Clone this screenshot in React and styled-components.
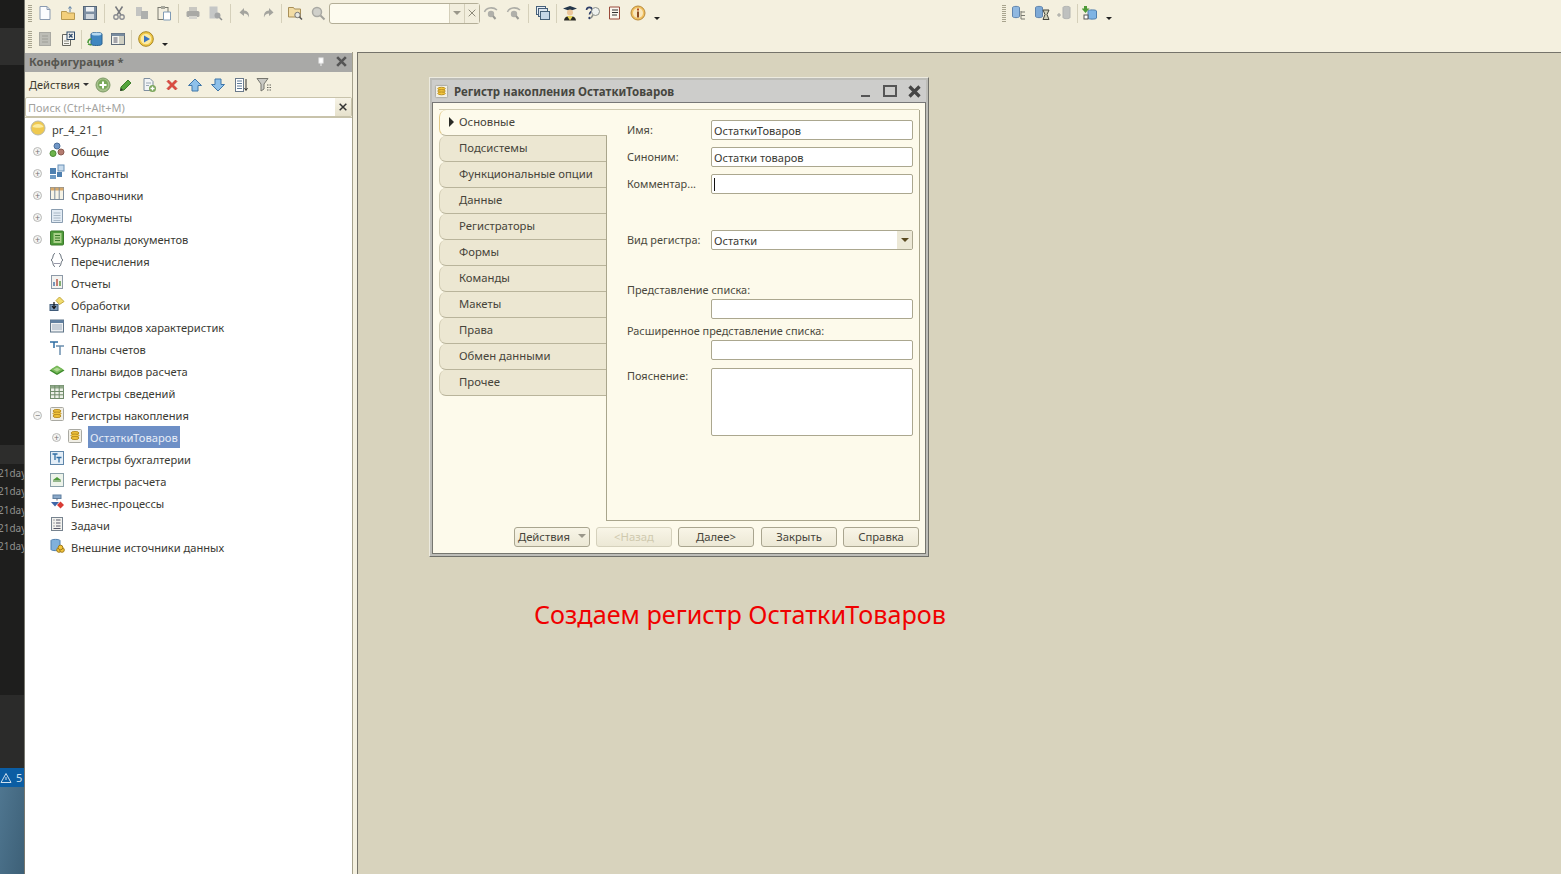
import React from "react";
import styled, { createGlobalStyle } from "styled-components";

const GlobalStyle = createGlobalStyle`
html, body {
    margin: 0;
    padding: 0;
    width: 1561px;
    height: 874px;
    overflow: hidden;
    background: #d8d3bd;
    font-family: "Noto Sans", "Open Sans", sans-serif;
}
* { box-sizing: border-box; }
`;

const S = {
    Page: styled.div`
    display: flex;
    width: 1561px;
    height: 874px;
    overflow: hidden;
    font-size: 11px;
    color: #3d3b2e;
    `,
    Strip: styled.div`
    display: flex;
    flex-direction: column;
    width: 25px;
    height: 874px;
    border-right: 1px solid #77776f;
    overflow: hidden;
    background: #1e1e1d;
    `,
    Band: styled.div`
    flex: none;
    height: ${p => p.$h}px;
    background: ${p => p.$bg};
    `,
    LogLines: styled.div`
    flex: none;
    height: 231px;
    margin-left: -2px;
    background: #1e1e1d;
    color: #8f8f8c;
    font-size: 10px;
    line-height: 18.3px;
    white-space: nowrap;
    `,
    StatusBadge: styled.div`
    flex: none;
    display: flex;
    align-items: center;
    gap: 4px;
    height: 19px;
    background: #0b5da3;
    color: #cfe0ee;
    font-size: 11px;
    `,
    Desktop: styled.div`
    flex: 1;
    background: linear-gradient(100deg, #4f7690 0%, #3d6077 100%);
    `,
    Main: styled.div`
    flex: 1;
    display: flex;
    flex-direction: column;
    min-width: 0;
    background: #f4f0df;
    `,
    Toolbars: styled.div`
    flex: none;
    height: 52px;
    `,
    ToolRow: styled.div`
    display: flex;
    align-items: center;
    height: 26px;
    padding-left: 3px;
    `,
    ToolGroup: styled.div`
    display: flex;
    align-items: center;
    flex: none;
    width: ${p => (p.$w ? `${p.$w}px` : "auto")};
    `,
    Grip: styled.div`
    flex: none;
    width: 4px;
    height: 17px;
    margin-right: 2px;
    background: repeating-linear-gradient(to bottom, #a8a48e 0 1px, transparent 1px 2px);
    `,
    ToolBtn: styled.div`
    flex: none;
    display: flex;
    align-items: center;
    justify-content: center;
    width: 22.6px;
    height: 22px;
    `,
    Sep: styled.div`
    flex: none;
    width: 1px;
    height: 19px;
    margin: 0 ${p => p.$m || 2.5}px;
    background: #d5d0ba;
    `,
    MenuArrow: styled.div`
    flex: none;
    width: 0;
    height: 0;
    margin: 10px 0 0 ${p => p.$m || 5}px;
    border-left: 3px solid transparent;
    border-right: 3px solid transparent;
    border-top: 3px solid #222;
    `,
    Combo: styled.div`
    flex: none;
    display: flex;
    width: 151px;
    height: 21px;
    border: 1px solid #b3ae97;
    border-radius: 3px;
    background: #fdfbef;
    `,
    ComboSpace: styled.div`
    flex: 1;
    `,
    ComboBtn: styled.div`
    flex: none;
    display: flex;
    align-items: center;
    justify-content: center;
    width: 15px;
    border-left: 1px solid #d4cfba;
    background: #f2eedd;
    color: #8d8a7a;
    `,
    Split: styled.div`
    flex: 1;
    display: flex;
    min-height: 0;
    `,
    Panel: styled.div`
    flex: none;
    display: flex;
    flex-direction: column;
    width: 328px;
    border-right: 1px solid #a5a18c;
    `,
    PanelHead: styled.div`
    flex: none;
    display: flex;
    align-items: center;
    height: 19px;
    margin-top: 1px;
    padding: 0 4px 2px;
    background: #a9a9a7;
    color: #565650;
    font-weight: 700;
    font-size: 11.2px;
    `,
    HeadTitle: styled.div`
    flex: 1;
    `,
    PinWrap: styled.div`
    display: flex;
    width: 20px;
    margin-right: 4px;
    justify-content: center;
    `,
    PanelBar: styled.div`
    flex: none;
    display: flex;
    align-items: center;
    height: 24px;
    padding-left: 4px;
    `,
    ActionsLink: styled.div`
    display: flex;
    align-items: center;
    width: 63px;
    color: #3d3b2e;
    `,
    SmallArrow: styled.span`
    display: inline-block;
    margin-left: 3px;
    border-left: 3px solid transparent;
    border-right: 3px solid transparent;
    border-top: 3px solid #333;
    `,
    PanelBtn: styled.div`
    flex: none;
    display: flex;
    align-items: center;
    justify-content: center;
    width: 22.9px;
    height: 22px;
    padding-top: 2px;
    `,
    Search: styled.div`
    flex: none;
    display: flex;
    height: 20px;
    margin-top: 1px;
    border: 1px solid #c8c3ab;
    border-radius: 2px;
    background: #fff;
    `,
    SearchText: styled.div`
    flex: 1;
    padding: 1px 0 0 2px;
    line-height: 18px;
    color: #a3a3a0;
    `,
    SearchClear: styled.div`
    flex: none;
    display: flex;
    align-items: center;
    justify-content: center;
    width: 16px;
    background: linear-gradient(#f6f3e6, #e6e1cc);
    `,
    Tree: styled.div`
    flex: 1;
    border-top: 1px solid #c8c3ab;
    background: #fff;
    font-size: 11.1px;
    `,
    TreeRow: styled.div`
    display: flex;
    align-items: center;
    height: 22px;
    padding-left: ${p => p.$indent}px;
    `,
    Toggle: styled.div`
    flex: none;
    display: flex;
    align-items: center;
    justify-content: center;
    width: 9px;
    height: 9px;
    margin: 1px ${p => p.$gap || 7}px 0 1px;
    border: 1px solid #b9b9b7;
    border-radius: 50%;
    background: #f4f4f2;
    color: #777;
    font-size: 9px;
    line-height: 7px;
    `,
    NoToggle: styled.div`
    flex: none;
    width: 17px;
    `,
    TreeIcon: styled.div`
    flex: none;
    display: flex;
    width: 16px;
    height: 16px;
    margin-right: ${p => p.$gap || 6}px;
    margin-bottom: 2px;
    `,
    TreeText: styled.div`
    white-space: nowrap;
    color: #3a3a33;
    `,
    Selected: styled.div`
    display: flex;
    align-items: center;
    height: 22px;
    margin-left: -1px;
    padding: 0 2px;
    background: #6d8fc6;
    color: #e6ecf6;
    font-size: 11.2px;
    white-space: nowrap;
    `,
    Workspace: styled.div`
    flex: 1;
    display: flex;
    flex-direction: column;
    align-items: flex-start;
    margin-left: 4px;
    padding: 24px 0 0 71px;
    border-left: 1px solid #75736a;
    border-top: 1px solid #75736a;
    background: #d8d3bd;
    `,
    Dialog: styled.div`
    flex: none;
    display: flex;
    flex-direction: column;
    width: 500px;
    height: 480px;
    border: 1px solid;
    border-color: #ecEAdf #6f6f69 #6f6f69 #ecEAdf;
    padding: 2px;
    background: #bdbdb8;
    `,
    DialogHead: styled.div`
    flex: none;
    display: flex;
    align-items: center;
    height: 23px;
    padding-left: 2px;
    border-bottom: 1px solid #777;
    background: #cdcdcb;
    `,
    DialogTitle: styled.div`
    flex: 1;
    margin-left: 5px;
    color: #46463f;
    font-weight: 700;
    font-size: 11.5px;
    `,
    WinBtn: styled.div`
    flex: none;
    display: flex;
    align-items: center;
    justify-content: center;
    width: 24px;
    height: 20px;
    `,
    DialogBody: styled.div`
    flex: 1;
    display: flex;
    flex-direction: column;
    padding: 6px 6px 0 6px;
    border: 1px solid #76766f;
    border-top: none;
    background: #fdfaeb;
    `,
    Pager: styled.div`
    flex: none;
    display: flex;
    height: 412px;
    border-top: 1px solid #cfcab0;
    `,
    Tabs: styled.div`
    flex: none;
    width: 167px;
    `,
    Tab: styled.div`
    position: relative;
    display: flex;
    align-items: center;
    height: 26px;
    margin-right: ${p => (p.$active ? "-1px" : "0")};
    padding: 0 0 2px ${p => (p.$active ? "9px" : "19px")};
    border-left: 1px solid ${p => (p.$active ? "#e0c98a" : "#cfcab0")};
    border-bottom: 1px solid #b9b49b;
    border-radius: 7px 0 0 7px;
    background: ${p => (p.$active ? "#fdfaeb" : "#ece7d2")};
    z-index: ${p => (p.$active ? 1 : 0)};
    color: #46443a;
    font-size: 11.3px;
    `,
    TabMark: styled.div`
    width: 0;
    height: 0;
    margin-right: 5px;
    border-top: 5px solid transparent;
    border-bottom: 5px solid transparent;
    border-left: 5px solid #2b2b26;
    `,
    Form: styled.div`
    flex: 1;
    padding: 10px 6px 0 20px;
    border-left: 1px solid #a9a58c;
    border-right: 1px solid #a9a58c;
    border-bottom: 1px solid #a9a58c;
    `,
    FormRow: styled.div`
    display: flex;
    align-items: ${p => (p.$top ? "flex-start" : "center")};
    margin-top: ${p => p.$mt || 0}px;
    `,
    Label: styled.div`
    flex: none;
    width: 84px;
    padding-bottom: ${p => (p.$top ? 0 : 2)}px;
    color: #4a483c;
    font-size: 10.9px;
    white-space: nowrap;
    `,
    WideLabel: styled.div`
    height: 17px;
    margin-top: ${p => p.$mt || 0}px;
    line-height: 16px;
    color: #4a483c;
    font-size: 10.9px;
    white-space: nowrap;
    `,
    Input: styled.div`
    display: flex;
    align-items: center;
    width: 202px;
    height: ${p => p.$h || 20}px;
    margin-left: ${p => p.$ml || 0}px;
    padding-left: 2px;
    border: 1px solid #aba78f;
    border-radius: 2px;
    background: #fff;
    color: #3a3a33;
    font-size: 11.1px;
    `,
    Caret: styled.div`
    width: 1px;
    height: 13px;
    background: #111;
    `,
    DropBtn: styled.div`
    display: flex;
    align-items: center;
    justify-content: center;
    width: 15px;
    height: 18px;
    margin-left: auto;
    background: #ece8d6;
    `,
    DropTri: styled.div`
    border-left: 4px solid transparent;
    border-right: 4px solid transparent;
    border-top: 4px solid ${p => p.$c || "#5a4a20"};
    `,
    Footer: styled.div`
    flex: none;
    display: flex;
    justify-content: flex-end;
    gap: 6px;
    margin-top: 6px;
    `,
    Button: styled.div`
    display: flex;
    align-items: center;
    justify-content: center;
    gap: 8px;
    width: 76px;
    height: 20px;
    padding-bottom: 2px;
    margin-right: ${p => p.$mr || 0}px;
    border: 1px solid ${p => (p.$disabled ? "#d5d1bc" : "#a9a58f")};
    border-radius: 3px;
    background: linear-gradient(#f8f5e7, #ece8d5);
    color: ${p => (p.$disabled ? "#cfc9ae" : "#46443a")};
    font-size: 11.3px;
    `,
    Note: styled.div`
    margin: 41px 0 0 105px;
    color: #f00000;
    font-size: 25.2px;
    line-height: 32px;
    white-space: nowrap;
    `,
};

const Svg = ({ size = 16, children }) => (
    <svg width={size} height={size} viewBox="0 0 16 16" fill="none">{children}</svg>
);

// toolbar and tree pictures, all on a 16 grid
const ICONS = {
    new: <><path d="M3 1.500h7l3 3v10H3z" fill="#fbfcfe" stroke="#8a9ab0" /><path d="M10 1.500v3h3" stroke="#8a9ab0" /></>,
    open: <><path d="M1.500 6.500h5l1 1.500h7v6.500h-13z" fill="#f3cf7b" stroke="#b99a50" /><path d="M10 7V2M8.500 3.500 10 1.500l1.500 2" stroke="#5b7fa5" /></>,
    save: <><rect x="1.500" y="1.500" width="13" height="13" fill="#7d8fa3" stroke="#556678" /><rect x="4" y="2" width="8" height="4.500" fill="#eef1f4" /><rect x="4" y="9" width="8" height="5" fill="#cfd6dd" /></>,
    cut: <><path d="M4.500 1.500 10 10M11.500 1.500 6 10" stroke="#77797d" strokeWidth="1.500" /><circle cx="5" cy="12" r="2.200" stroke="#8c8e93" strokeWidth="1.400" /><circle cx="11" cy="12" r="2.200" stroke="#8c8e93" strokeWidth="1.400" /></>,
    copy: <><path d="M2 2h6v9H2z" fill="#c3c4c2" /><path d="M7 6h7v8H7z" fill="#aeb0ae" /></>,
    paste: <><rect x="2" y="2.500" width="10" height="12" fill="#f3efe0" stroke="#7a7a70" /><rect x="5" y="1" width="4" height="3" fill="#a7a79c" /><path d="M7.500 7h7v8h-7z" fill="#fff" stroke="#7f9ab5" /></>,
    print: <><rect x="4" y="2" width="8" height="4" fill="#c9c8c2" /><rect x="1.500" y="6" width="13" height="6" rx="1.500" fill="#a9a9a5" /><rect x="4" y="11" width="8" height="3" fill="#d5d4ce" /></>,
    preview: <><path d="M2.500 1.500h8v12h-8z" fill="#c5c7c6" /><circle cx="10.500" cy="10.500" r="3" fill="#a3a5a5" /><path d="m12.500 12.500 2.500 2.500" stroke="#8d8f8f" strokeWidth="1.500" /></>,
    undo: <path d="M7 3 2.500 7.500 7 11V8.500c2.500 0 4 1 5 4 .5-4-1.500-7-5-7z" fill="#a4a49e" />,
    redo: <path d="M9 3l4.500 4.500L9 11V8.500c-2.500 0-4 1-5 4-.5-4 1.500-7 5-7z" fill="#a4a49e" />,
    findFolder: <><path d="M1.500 2.500h5l1 1.500h6v8h-12z" fill="#f2dca4" stroke="#a88f58" /><circle cx="10.500" cy="10" r="2.700" fill="#e8e8e0" stroke="#777" /><path d="m12.500 12 2.500 2.500" stroke="#555" strokeWidth="1.500" /></>,
    search: <><circle cx="7" cy="7" r="4.500" fill="#d0d0ca" stroke="#a9a9a3" strokeWidth="1.500" /><path d="m10.500 10.500 4 4" stroke="#a0a09a" strokeWidth="2" /></>,
    findNext: <><path d="M1.500 7C3 2.500 10 1.500 14 5" stroke="#adada7" strokeWidth="1.500" /><circle cx="8" cy="9" r="3.200" fill="#b0b0aa" /><path d="m10 11 2.500 3" stroke="#9a9a94" strokeWidth="2" /></>,
    windows: <><rect x="1.500" y="1.500" width="9" height="8" fill="#e8eef5" stroke="#46607a" /><rect x="3.500" y="3.500" width="9" height="8" fill="#dbe5ef" stroke="#46607a" /><rect x="5.500" y="6.500" width="9" height="8" fill="#c6d7e8" stroke="#46607a" /></>,
    student: <><path d="M1 3.500 8 1l7 2.500L8 6z" fill="#24364a" /><circle cx="8" cy="7.500" r="3" fill="#edc79b" /><path d="M2 15.500c.5-3.500 3-4.500 6-4.500s5.500 1 6 4.500z" fill="#2b2b24" /><path d="M5 11l3 4.500 3-4.500z" fill="#e9d75b" /></>,
    helpFind: <><path d="M1.500 5C2 1.500 7 1.500 7 5c0 2-2.500 2-2.500 4.500" stroke="#2f3f69" strokeWidth="1.600" /><circle cx="4.500" cy="13" r="1.200" fill="#2f3f69" /><circle cx="10.500" cy="6.500" r="4" fill="#eef1ee" stroke="#8b8f8b" /><path d="m8 10-2 3" stroke="#8b8f8b" strokeWidth="1.500" /></>,
    book: <><path d="M2.500 2h10v12h-10z" fill="#fbf7ef" stroke="#9a4a3a" /><path d="M5 5h6M5 7.500h6M5 10h5" stroke="#333" /></>,
    info: <><circle cx="8" cy="8" r="7" fill="#f0c060" stroke="#b98a3a" /><circle cx="8" cy="8" r="5" fill="#f9e7bd" /><rect x="7" y="6.500" width="2" height="6" fill="#8a4a20" /><rect x="7" y="3.500" width="2" height="2" fill="#b04a20" /></>,
    dbTree: <><path d="M1.500 2.500c0-1.500 7-1.500 7 0v9c0 1.500-7 1.500-7 0z" fill="#90b8e0" stroke="#5f84ad" /><path d="M10 6v8M10 7h4M10 10.500h4M10 14h4" stroke="#7a7a70" /></>,
    dbTime: <><path d="M1.500 2.500c0-1.500 7-1.500 7 0v9c0 1.500-7 1.500-7 0z" fill="#7da9d6" stroke="#5f84ad" /><path d="M9 5h6l-2 4.500L15 14.500H9l2-5z" fill="#d0d0b8" stroke="#44443c" /></>,
    dbGrey: <><path d="M7 2.500c0-1.500 7-1.500 7 0v10c0 1.500-7 1.500-7 0z" fill="#bfc1bf" stroke="#b0b2b0" /><path d="M1 10h4M3 8v4" stroke="#a0a29f" /></>,
    dbArrow: <><path d="M6 6c0-1.500 8.500-1.500 8.500 0v7c0 1.500-8.500 1.500-8.500 0z" fill="#7fb4e4" stroke="#4f7fae" /><path d="M2 1h3v2.500h2.500L3.500 8-.5 3.500H2z" fill="#4e9a38" /><rect x="2" y="10" width="4" height="4" fill="#fff" stroke="#555" /></>,
    module: <><rect x="2.500" y="1.500" width="11" height="13" fill="#bdbdb6" stroke="#a9a9a2" /><path d="M5 5h6M5 8h6M5 11h6" stroke="#9e9e97" /></>,
    xdoc: <><path d="M2.500 3.500h8v11h-8z" fill="#f7f6f0" stroke="#66665e" /><rect x="7" y="1" width="7.500" height="7.500" fill="#f4f4f0" stroke="#2e4a6b" /><path d="m9 3 3.500 3.500M12.500 3 9 6.500" stroke="#2e4a6b" strokeWidth="1.300" /><path d="M4 10h5M4 12.500h5" stroke="#88887f" /></>,
    dbUpdate: <><path d="M4 3c0-2 11-2 11 0v10c0 2-11 2-11 0z" fill="#3f86c0" stroke="#2d6390" /><ellipse cx="9.500" cy="3" rx="5" ry="1.500" fill="#b5d8ef" /><path d="M1 12c0-2.500 1.500-4 3.500-4M4.500 14l-3.500-1" stroke="#4a9a3b" strokeWidth="1.600" /></>,
    tablePane: <><rect x="1.500" y="2.500" width="13" height="11" fill="#f4f4ee" stroke="#5e6b78" /><rect x="1.500" y="2.500" width="13" height="2.500" fill="#788b9f" /><rect x="9" y="5" width="5" height="8" fill="#cfcfc2" /><path d="M3.500 7h4M3.500 9h4M3.500 11h4" stroke="#556" /></>,
    run: <><circle cx="8" cy="8" r="7.300" fill="#f1c94a" stroke="#a88620" /><circle cx="8" cy="8" r="5.300" fill="#fbeba6" /><path d="M6 4.500 12 8l-6 3.500z" fill="#3b74c2" /></>,
    add: <><circle cx="8" cy="8" r="7" fill="#a6c08c" stroke="#7d9a66" /><circle cx="8" cy="7.500" r="5" fill="#79a85a" /><path d="M8 4.500v7M4.500 8h7" stroke="#fff" strokeWidth="2" /></>,
    pencil: <><path d="m3 10 7-7 3 3-7 7-3.500.5z" fill="#55a43c" stroke="#3e7e2a" /><path d="m2 14 1-3 2 2z" fill="#333" /></>,
    addDoc: <><path d="M3 1.500h6l3 3v9H3z" fill="#f2f4f6" stroke="#7f8f9f" /><path d="M5 6h5M5 8.500h3" stroke="#9aa8b5" /><circle cx="11.500" cy="11.500" r="3.500" fill="#7ba65c" /><path d="M11.500 9.500v4M9.500 11.500h4" stroke="#fff" strokeWidth="1.300" /></>,
    remove: <path d="M3 4.500 4.500 3 8 6.500 11.500 3 13 4.500 9.500 8l3.500 3.500-1.500 1.500L8 9.500 4.500 13 3 11.500 6.500 8z" fill="#dd4a40" stroke="#c43c34" strokeWidth=".7" />,
    up: <path d="M8 2 14.500 8.500H11V14H5V8.500H1.500z" fill="#8ec1ea" stroke="#3f76a8" />,
    down: <path d="M8 14 14.500 7.500H11V2H5v5.500H1.500z" fill="#8ec1ea" stroke="#3f76a8" />,
    sortList: <><rect x="2.500" y="1.500" width="8" height="13" fill="#fff" stroke="#6a7a8b" /><path d="M4 4h5M4 6.500h5M4 9h5M4 11.500h5" stroke="#5f7b97" /><path d="M13 2v11M11.500 11l1.500 2.500 1.500-2.500" stroke="#333" /></>,
    filter: <><path d="M1 1.500h11L8 7v5l-3 2V7z" fill="#c9c9c4" stroke="#77776f" /><path d="M11 8h4M11 10.500h4M11 13h4" stroke="#66665e" strokeDasharray="1.500 1" /></>,
    root: <><circle cx="8" cy="8" r="7" fill="#efc94f" stroke="#b8b8a9" /><path d="M2.500 7C3.500 3 12.500 3 13.500 7c-2 1-9 1-11 0z" fill="#fbeb9e" /></>,
    common: <><circle cx="8" cy="4" r="3" fill="#6f96c7" stroke="#4d6f99" /><circle cx="4" cy="11.500" r="3" fill="#6fb54d" stroke="#4d8a33" /><circle cx="12" cy="10" r="3" fill="#b47c70" stroke="#8a5a50" /></>,
    constants: <><rect x="1" y="4" width="6" height="6" fill="#4f80b0" /><rect x="9" y="1" width="6" height="6" fill="#c8dbec" stroke="#6b92b8" /><rect x="1" y="11" width="6" height="4" fill="#6f9bc4" /><rect x="8" y="8" width="5" height="5" fill="#4f80b0" /></>,
    catalogs: <><rect x="1.500" y="1.500" width="13" height="12" fill="#f6f3e6" stroke="#7d8d9d" /><rect x="1.500" y="1.500" width="13" height="3" fill="#d6a86a" /><path d="M5.800 1.500v12M10.200 1.500v12" stroke="#7d8d9d" /></>,
    docs: <><path d="M2.500 1.500h11v13h-11z" fill="#e2ebf4" stroke="#8a9db0" /><path d="M4.500 5h7M4.500 7.500h7M4.500 10h7M4.500 12.500h7" stroke="#a9b8c6" /></>,
    journals: <><rect x="1.500" y="1" width="13" height="14" rx="1" fill="#4f9a3a" stroke="#3b7a2b" /><rect x="4.500" y="3" width="8" height="10" fill="#a8cf88" /><path d="M6 5.500h5M6 8h5M6 10.500h5" stroke="#3b7a2b" /></>,
    enums: <><path d="M6 1.500C3.500 1.500 4.500 7 2 8c2.500 1 1.500 6.500 4 6.500M10 1.500c2.500 0 1.500 5.500 4 6.500-2.500 1-1.500 6.500-4 6.500" stroke="#55606c" /><path d="M5.500 11.500h1M7.500 11.500h1M9.500 11.500h1" stroke="#335" /></>,
    reports: <><rect x="2.500" y="1.500" width="11" height="13" fill="#f3f3f0" stroke="#8d9aa8" /><path d="M5 12V8" stroke="#4f79a8" strokeWidth="1.500" /><path d="M8 12V5" stroke="#b8574a" strokeWidth="1.500" /><path d="M11 12V7" stroke="#5c9a48" strokeWidth="1.500" /></>,
    processing: <><path d="m10.500 1 4.500 4.500-4.500 3-3.500-4z" fill="#f1dc70" stroke="#c4a93c" /><rect x="1" y="8.500" width="8" height="6" fill="#7d9ab8" stroke="#3f5a78" /><path d="M5 6v6M3 10l2 2.500L7 10" stroke="#111" strokeWidth="1.200" /></>,
    charTypes: <><rect x="1.500" y="2" width="13" height="12" fill="#eef0f2" stroke="#5f7488" /><rect x="1.500" y="2" width="13" height="3" fill="#5f7fa0" /><path d="M3.500 7h9M3.500 9h9M3.500 11h9" stroke="#4a6a8a" strokeDasharray="1 1" /></>,
    accounts: <><path d="M1 2h8M5 2v6" stroke="#2e6da4" strokeWidth="1.500" /><path d="M7 6h8M11 6v9" stroke="#6b8fae" strokeWidth="1.500" /></>,
    calcTypes: <><path d="M8 13 .5 8.500 8 4l7.500 4.500z" fill="#3c8a2a" /><path d="M1.500 7.500 8 3.500l6.500 4L8 11.500z" fill="#78b95a" /><path d="M4.500 7.500 8 5.500l3.500 2L8 9.500z" fill="#b2d996" /></>,
    infoReg: <><rect x="1.500" y="1.500" width="13" height="13" fill="#edf0e8" stroke="#6f8a6a" /><rect x="1.500" y="1.500" width="13" height="3" fill="#8fa888" /><path d="M1.500 7.500h13M1.500 10.800h13M5.800 1.500v13M10.200 1.500v13" stroke="#6f8a6a" /></>,
    accumReg: <><rect x="1.500" y="1.500" width="13" height="13" rx="1" fill="#f1efe6" stroke="#a9a9a2" /><ellipse cx="8" cy="5" rx="4" ry="1.500" fill="#f3c53c" stroke="#b98f22" /><ellipse cx="8" cy="7.500" rx="4" ry="1.500" fill="#f3c53c" stroke="#b98f22" /><ellipse cx="8" cy="10" rx="4" ry="1.500" fill="#f3c53c" stroke="#b98f22" /></>,
    acctReg: <><rect x="1.500" y="1.500" width="13" height="13" fill="#e4eef7" stroke="#5f86aa" /><path d="M3.500 4h5M6 4v6" stroke="#2e6da4" strokeWidth="1.300" /><path d="M7.500 7.500h5M10 7.500v5" stroke="#2e6da4" strokeWidth="1.300" /></>,
    calcReg: <><rect x="1.500" y="1.500" width="13" height="13" fill="#edf3ea" stroke="#8aa0a8" /><path d="M8 5 12 8H4z" fill="#4f9a3a" /><path d="M4 9h8" stroke="#3a7a2a" /></>,
    bizProc: <><rect x="4" y="1" width="8" height="3.500" fill="#8ba9c9" stroke="#5f7f9f" /><path d="M8 4.500v2" stroke="#667" /><path d="M2 8h8l-4 4.500z" fill="#3e66a8" /><path d="M11.500 7.500 15 11l-3.500 3.500L8 11z" fill="#d83b34" /></>,
    tasks: <><rect x="2.500" y="1.500" width="11" height="13" fill="#f2f2ee" stroke="#77838f" /><path d="M4.500 4h1M7 4h4.500M4.500 7h1M7 7h4.500M4.500 10h1M7 10h4.500M4.500 12.500h7" stroke="#556" /></>,
    external: <><path d="M2 2.500c0-1.500 9-1.500 9 0v9c0 1.500-9 1.500-9 0z" fill="#7fb0dc" stroke="#4f7fae" /><circle cx="10" cy="12" r="2.300" fill="#f3c53c" stroke="#a07a1a" /><circle cx="13" cy="12" r="2.300" fill="#f3c53c" stroke="#a07a1a" /><circle cx="11.500" cy="9.500" r="2.300" fill="#f3c53c" stroke="#a07a1a" /></>,
};

const Icon = ({ name }) => <Svg>{ICONS[name]}</Svg>;

const Tool = ({ name }) => (
    <S.ToolBtn><Icon name={name} /></S.ToolBtn>
);

const CrossIcon = ({ size = 12, color = "#555", width = 2 }) => (
    <svg width={size} height={size} viewBox="0 0 12 12" fill="none">
        <path d="M2 2l8 8M10 2l-8 8" stroke={color} strokeWidth={width} />
    </svg>
);

const TREE = [
    ["common", "Общие", true],
    ["constants", "Константы", true],
    ["catalogs", "Справочники", true],
    ["docs", "Документы", true],
    ["journals", "Журналы документов", true],
    ["enums", "Перечисления"],
    ["reports", "Отчеты"],
    ["processing", "Обработки"],
    ["charTypes", "Планы видов характеристик"],
    ["accounts", "Планы счетов"],
    ["calcTypes", "Планы видов расчета"],
    ["infoReg", "Регистры сведений"],
];

const TREE_BOTTOM = [
    ["acctReg", "Регистры бухгалтерии"],
    ["calcReg", "Регистры расчета"],
    ["bizProc", "Бизнес-процессы"],
    ["tasks", "Задачи"],
    ["external", "Внешние источники данных"],
];

const TABS = ["Основные", "Подсистемы", "Функциональные опции", "Данные", "Регистраторы", "Формы", "Команды", "Макеты", "Права", "Обмен данными", "Прочее"];

const TreeItem = ({ icon, text, toggle }) => (
    <S.TreeRow $indent={7}>
        {toggle ? <S.Toggle>+</S.Toggle> : <S.NoToggle />}
        <S.TreeIcon><Icon name={icon} /></S.TreeIcon>
        <S.TreeText>{text}</S.TreeText>
    </S.TreeRow>
);

const App = () => {
    return (
        <S.Page>
            <GlobalStyle />
            <S.Strip>
                <S.Band $h={28} $bg="#1c1c1b" />
                <S.Band $h={37} $bg="#2e2e2d" />
                <S.Band $h={380} $bg="#1d1d1c" />
                <S.Band $h={19} $bg="#2d2d2c" />
                <S.LogLines>
                    <div>21day</div>
                    <div>21day</div>
                    <div>21day</div>
                    <div>21day</div>
                    <div>21day</div>
                </S.LogLines>
                <S.Band $h={73} $bg="#2b2b2a" />
                <S.StatusBadge>
                    <svg width="12" height="12" viewBox="0 0 12 12" fill="none">
                        <path d="M6 1.500 11 10.500H1z" stroke="#cfe0ee" />
                        <path d="M6 5v3" stroke="#cfe0ee" />
                    </svg>
                    5
                </S.StatusBadge>
                <S.Desktop />
            </S.Strip>
            <S.Main>
                <S.Toolbars>
                    <S.ToolRow>
                        <S.ToolGroup $w={974}>
                            <S.Grip />
                            <Tool name="new" />
                            <Tool name="open" />
                            <Tool name="save" />
                            <S.Sep />
                            <Tool name="cut" />
                            <Tool name="copy" />
                            <Tool name="paste" />
                            <S.Sep />
                            <Tool name="print" />
                            <Tool name="preview" />
                            <S.Sep $m={3} />
                            <Tool name="undo" />
                            <Tool name="redo" />
                            <S.Sep $m={2} />
                            <Tool name="findFolder" />
                            <Tool name="search" />
                            <S.Combo>
                                <S.ComboSpace />
                                <S.ComboBtn><S.DropTri $c="#9a978a" /></S.ComboBtn>
                                <S.ComboBtn><CrossIcon size={10} color="#8d8a7a" width={1.2} /></S.ComboBtn>
                            </S.Combo>
                            <Tool name="findNext" />
                            <Tool name="findNext" />
                            <S.Sep />
                            <Tool name="windows" />
                            <S.Sep $m={2} />
                            <Tool name="student" />
                            <Tool name="helpFind" />
                            <Tool name="book" />
                            <Tool name="info" />
                            <S.MenuArrow />
                        </S.ToolGroup>
                        <S.ToolGroup>
                            <S.Grip />
                            <Tool name="dbTree" />
                            <Tool name="dbTime" />
                            <Tool name="dbGrey" />
                            <S.Sep $m={1} />
                            <Tool name="dbArrow" />
                            <S.MenuArrow />
                        </S.ToolGroup>
                    </S.ToolRow>
                    <S.ToolRow>
                        <S.ToolGroup>
                            <S.Grip />
                            <Tool name="module" />
                            <Tool name="xdoc" />
                            <S.Sep $m={2} />
                            <Tool name="dbUpdate" />
                            <Tool name="tablePane" />
                            <S.Sep $m={2} />
                            <Tool name="run" />
                            <S.MenuArrow />
                        </S.ToolGroup>
                    </S.ToolRow>
                </S.Toolbars>
                <S.Split>
                    <S.Panel>
                        <S.PanelHead>
                            <S.HeadTitle>Конфигурация *</S.HeadTitle>
                            <S.PinWrap>
                                <svg width="8" height="10" viewBox="0 0 8 10" fill="none">
                                    <rect x="2" y="1" width="4" height="5" fill="#fff" stroke="#eee" />
                                    <path d="M4 6v3" stroke="#eee" />
                                </svg>
                            </S.PinWrap>
                            <CrossIcon size={13} color="#555" width={2.4} />
                        </S.PanelHead>
                        <S.PanelBar>
                            <S.ActionsLink>Действия<S.SmallArrow /></S.ActionsLink>
                            <S.PanelBtn><Icon name="add" /></S.PanelBtn>
                            <S.PanelBtn><Icon name="pencil" /></S.PanelBtn>
                            <S.PanelBtn><Icon name="addDoc" /></S.PanelBtn>
                            <S.PanelBtn><Icon name="remove" /></S.PanelBtn>
                            <S.PanelBtn><Icon name="up" /></S.PanelBtn>
                            <S.PanelBtn><Icon name="down" /></S.PanelBtn>
                            <S.PanelBtn><Icon name="sortList" /></S.PanelBtn>
                            <S.PanelBtn><Icon name="filter" /></S.PanelBtn>
                        </S.PanelBar>
                        <S.Search>
                            <S.SearchText>Поиск (Ctrl+Alt+M)</S.SearchText>
                            <S.SearchClear><CrossIcon size={10} color="#333" width={1.8} /></S.SearchClear>
                        </S.Search>
                        <S.Tree>
                            <S.TreeRow $indent={5}>
                                <S.TreeIcon><Icon name="root" /></S.TreeIcon>
                                <S.TreeText>pr_4_21_1</S.TreeText>
                            </S.TreeRow>
                            {TREE.map(([icon, text, toggle]) => (
                                <TreeItem key={text} icon={icon} text={text} toggle={toggle} />
                            ))}
                            <S.TreeRow $indent={7}>
                                <S.Toggle>−</S.Toggle>
                                <S.TreeIcon><Icon name="accumReg" /></S.TreeIcon>
                                <S.TreeText>Регистры накопления</S.TreeText>
                            </S.TreeRow>
                            <S.TreeRow $indent={26}>
                                <S.Toggle $gap={6}>+</S.Toggle>
                                <S.TreeIcon><Icon name="accumReg" /></S.TreeIcon>
                                <S.Selected>ОстаткиТоваров</S.Selected>
                            </S.TreeRow>
                            {TREE_BOTTOM.map(([icon, text]) => (
                                <TreeItem key={text} icon={icon} text={text} />
                            ))}
                        </S.Tree>
                    </S.Panel>
                    <S.Workspace>
                        <S.Dialog>
                            <S.DialogHead>
                                <Svg size={15}>{ICONS.accumReg}</Svg>
                                <S.DialogTitle>Регистр накопления ОстаткиТоваров</S.DialogTitle>
                                <S.WinBtn>
                                    <svg width="12" height="12" viewBox="0 0 12 12"><rect x="1" y="10" width="9" height="2" fill="#555" /></svg>
                                </S.WinBtn>
                                <S.WinBtn>
                                    <svg width="14" height="14" viewBox="0 0 14 14" fill="none"><rect x="1" y="2" width="12" height="10" stroke="#555" strokeWidth="2" /></svg>
                                </S.WinBtn>
                                <S.WinBtn><CrossIcon size={15} color="#444" width={2.6} /></S.WinBtn>
                            </S.DialogHead>
                            <S.DialogBody>
                                <S.Pager>
                                    <S.Tabs>
                                        {TABS.map((t, i) => (
                                            <S.Tab key={t} $active={i === 0}>
                                                {i === 0 && <S.TabMark />}
                                                {t}
                                            </S.Tab>
                                        ))}
                                    </S.Tabs>
                                    <S.Form>
                                        <S.FormRow>
                                            <S.Label>Имя:</S.Label>
                                            <S.Input>ОстаткиТоваров</S.Input>
                                        </S.FormRow>
                                        <S.FormRow $mt={7}>
                                            <S.Label>Синоним:</S.Label>
                                            <S.Input>Остатки товаров</S.Input>
                                        </S.FormRow>
                                        <S.FormRow $mt={7}>
                                            <S.Label>Комментар...</S.Label>
                                            <S.Input><S.Caret /></S.Input>
                                        </S.FormRow>
                                        <S.FormRow $mt={36}>
                                            <S.Label>Вид регистра:</S.Label>
                                            <S.Input>
                                                Остатки
                                                <S.DropBtn><S.DropTri /></S.DropBtn>
                                            </S.Input>
                                        </S.FormRow>
                                        <S.WideLabel $mt={32}>Представление списка:</S.WideLabel>
                                        <S.Input $ml={84}></S.Input>
                                        <S.WideLabel $mt={4}>Расширенное представление списка:</S.WideLabel>
                                        <S.Input $ml={84}></S.Input>
                                        <S.FormRow $mt={8} $top>
                                            <S.Label $top>Пояснение:</S.Label>
                                            <S.Input $h={68}></S.Input>
                                        </S.FormRow>
                                    </S.Form>
                                </S.Pager>
                                <S.Footer>
                                    <S.Button>Действия<S.DropTri $c="#9a978a" /></S.Button>
                                    <S.Button $disabled>&lt;Назад</S.Button>
                                    <S.Button $mr={1}>Далее&gt;</S.Button>
                                    <S.Button>Закрыть</S.Button>
                                    <S.Button>Справка</S.Button>
                                </S.Footer>
                            </S.DialogBody>
                        </S.Dialog>
                        <S.Note>Создаем регистр ОстаткиТоваров</S.Note>
                    </S.Workspace>
                </S.Split>
            </S.Main>
        </S.Page>
    );
};

export default App;
